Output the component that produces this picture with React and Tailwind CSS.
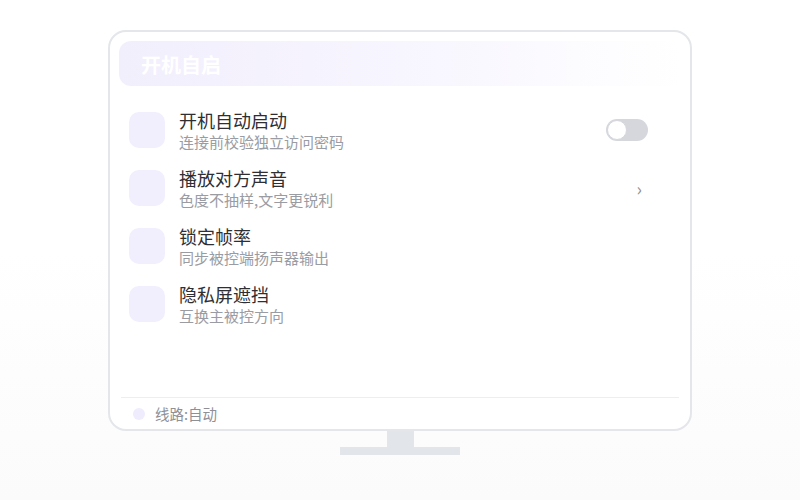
import React, { useState } from 'react';

const rows = [
  { title: '开机自动启动', sub: '连接前校验独立访问密码', action: 'toggle' },
  { title: '播放对方声音', sub: '色度不抽样,文字更锐利', action: 'chevron' },
  { title: '锁定帧率', sub: '同步被控端扬声器输出' },
  { title: '隐私屏遮挡', sub: '互换主被控方向' },
];

const Toggle = ({ on, onChange }) => (
  <button
    onClick={() => onChange(!on)}
    className={`relative w-[42px] h-[22px] rounded-full ${on ? 'bg-[#8b7cf6]' : 'bg-[#d5d7dd]'}`}
  >
    <span
      className={`absolute top-[1px] w-[20px] h-[20px] rounded-full bg-white border border-[#d5d7dd] ${on ? 'left-[21px]' : 'left-[1px]'}`}
    />
  </button>
);

const App = () => {
  const [autoStart, setAutoStart] = useState(false);

  return (
    <div
      className="w-[800px] h-[500px] bg-gradient-to-b from-white via-white to-[#fbfbfc] flex flex-col items-center pt-[30px]"
      style={{ fontFamily: '"Noto Sans CJK SC", "Noto Sans", sans-serif' }}
    >
      {/* Monitor */}
      <div className="w-[584px] h-[401px] border-2 border-[#e4e6ea] rounded-[18px] bg-white flex flex-col px-[9px] pt-[9px]">
        {/* Header */}
        <div className="h-[45px] rounded-xl bg-gradient-to-r from-[#f2effd] via-[#f7f5fe] to-white flex items-center px-[22px] pt-[2px]">
          <span className="text-white text-[20px] font-bold leading-none">开机自启</span>
        </div>

        {/* Settings list */}
        <div className="flex flex-col gap-[22px] mt-[26px] pl-[10px] pr-[33px]">
          {rows.map((r) => (
            <div key={r.title} className="flex items-center h-[36px]">
              <div className="w-[36px] h-[36px] rounded-[10px] bg-[#f1eefd] shrink-0" />
              <div className="ml-[14px] flex flex-col flex-1">
                <span className="text-[18px] leading-[22px] text-[#2f2f33]">{r.title}</span>
                <span className="text-[15px] leading-[20px] text-[#9a9ca3] mt-[1px]">{r.sub}</span>
              </div>
              {r.action === 'toggle' && <Toggle on={autoStart} onChange={setAutoStart} />}
              {r.action === 'chevron' && (
                <span className="text-[#8f9198] text-[18px] leading-none mr-[6px]">›</span>
              )}
            </div>
          ))}
        </div>

        <div className="flex-1" />

        {/* Footer */}
        <div className="border-t border-[#eceef1] mx-[2px] h-[32px] flex items-center pl-[12px]">
          <span className="w-[12px] h-[12px] rounded-full bg-[#efecfd]" />
          <span className="ml-[10px] text-[14.5px] text-[#8e9096]">线路:自动</span>
        </div>
      </div>

      {/* Stand */}
      <div className="w-[27px] h-[16px] bg-[#e2e5e9]" />
      <div className="w-[120px] h-[8px] bg-[#e2e5e9]" />
    </div>
  );
};

export default App;
